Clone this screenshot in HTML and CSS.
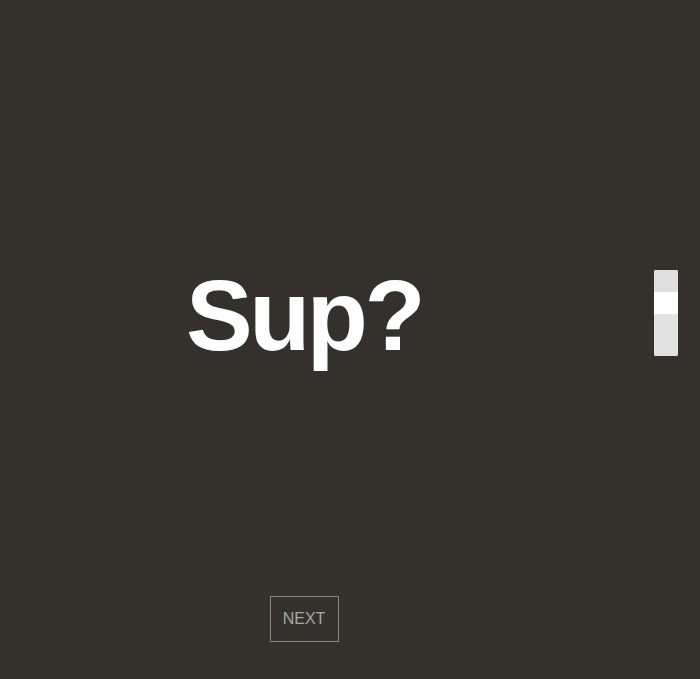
FILE: index.html
```html
<!DOCTYPE html>
<html>
<head>
<meta charset="utf-8">
<link rel="stylesheet" href="styles.css">
</head>
<body>
<div class="page">
  <main class="stage">
    <h1 class="title">Sup?</h1>
    <button class="next">NEXT</button>
  </main>
  <div class="pager">
    <span class="seg"></span>
    <span class="seg active"></span>
    <span class="seg tall"></span>
  </div>
</div>
</body>
</html>
```
FILE: styles.css
```css
html, body {
  margin: 0;
  padding: 0;
  background: #34312d;
}
.page {
  position: relative;
  width: 700px;
  height: 679px;
  overflow: hidden;
  font-family: "Liberation Sans", Arial, sans-serif;
}
.stage {
  width: 608px;
  height: 679px;
  display: flex;
  flex-direction: column;
  align-items: center;
  box-sizing: border-box;
  padding-top: 255px;
}
.title {
  margin: 0;
  color: #fff;
  font-size: 100px;
  font-weight: bold;
  line-height: 120px;
  letter-spacing: -3.5px;
}
.next {
  margin-top: 221px;
  width: 69px;
  height: 46px;
  background: transparent;
  border: 1px solid #8a8783;
  color: #a9a6a2;
  font-family: "Liberation Sans", Arial, sans-serif;
  font-size: 16px;
  padding: 0;
}
.pager {
  position: absolute;
  left: 654px;
  top: 270px;
  width: 24px;
  height: 86px;
  border-radius: 2px;
  overflow: hidden;
  display: flex;
  flex-direction: column;
  background: #e2e2e2;
}
.seg {
  display: block;
  height: 22px;
  background: #e0dfdf;
}
.seg.active {
  background: #ffffff;
}
.seg.tall {
  flex: 1;
  background: #e2e2e2;
}
```
